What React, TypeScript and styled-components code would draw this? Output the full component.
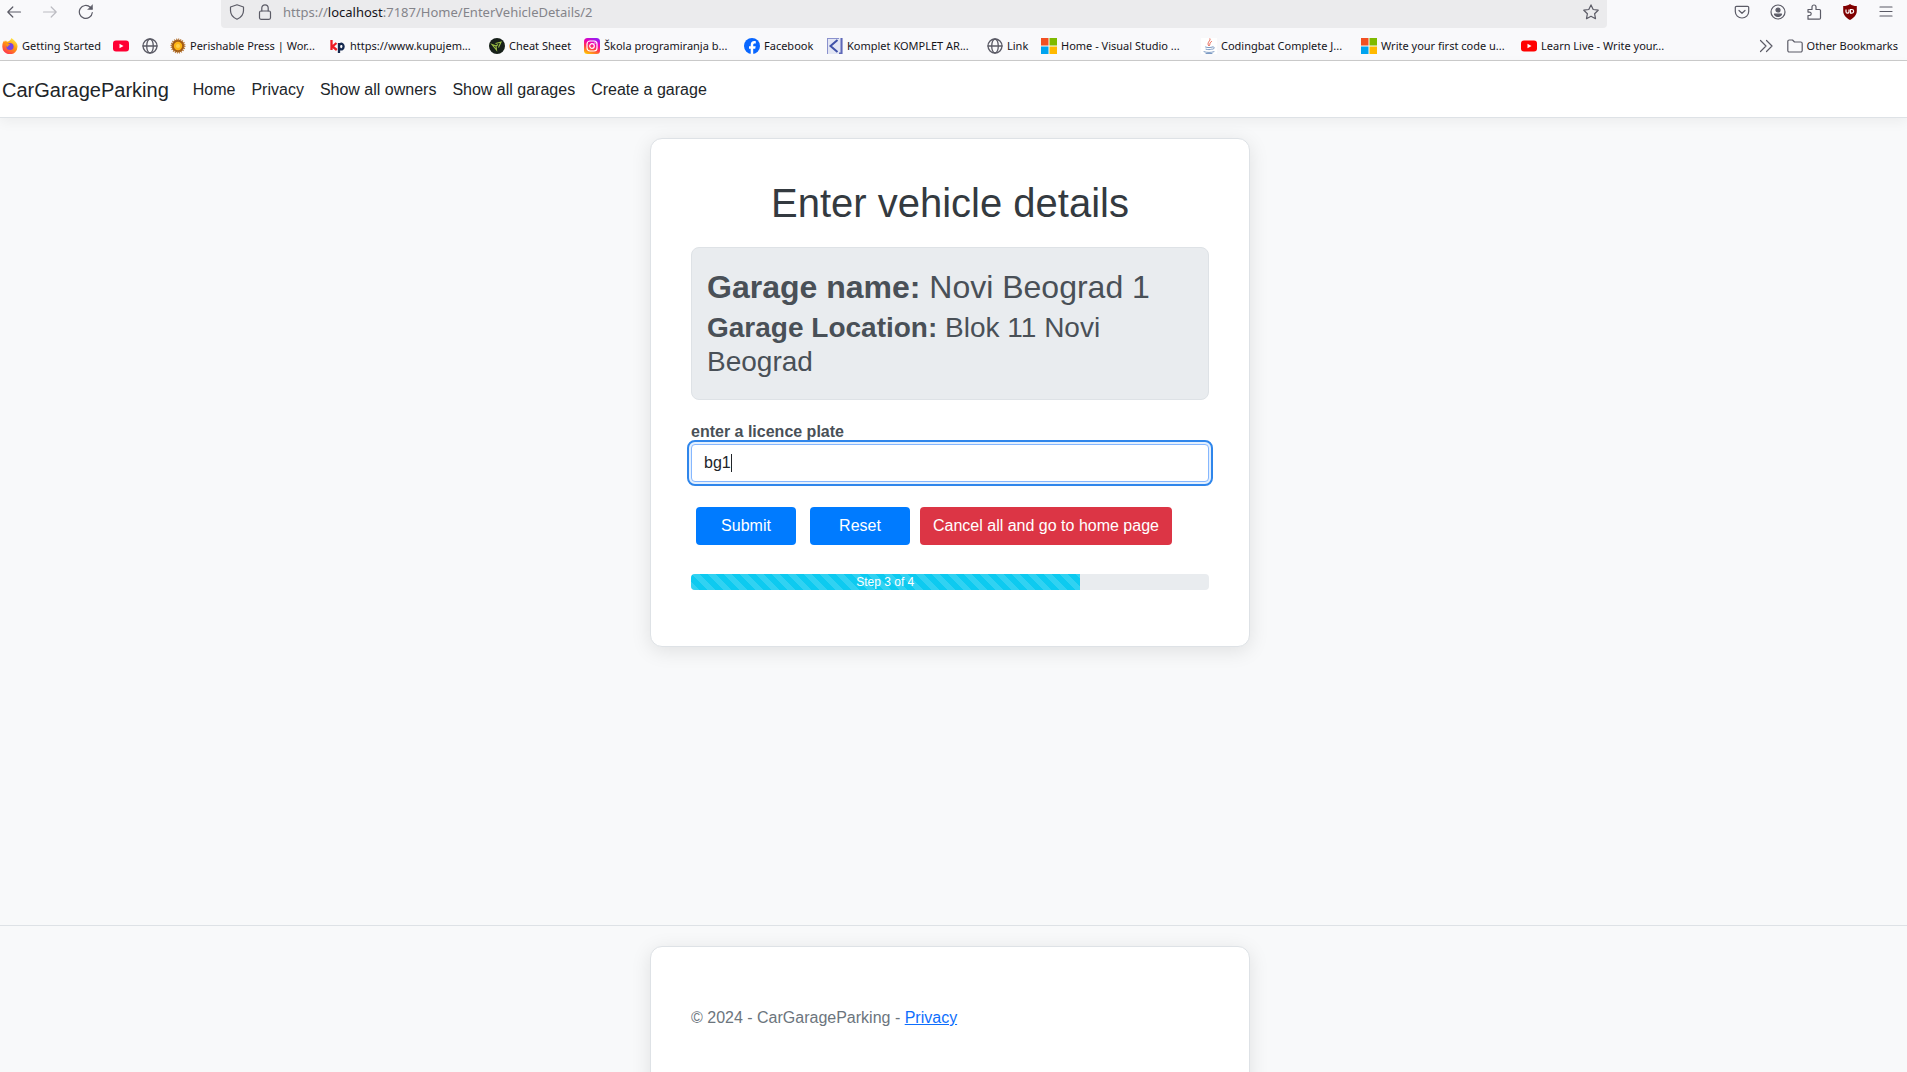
import React, { useEffect, useLayoutEffect, useRef, useState } from "react";
import styled, { createGlobalStyle, keyframes } from "styled-components";

const GlobalStyle = createGlobalStyle`
  *, *::before, *::after { box-sizing: border-box; }
  body { margin: 0; background: #f8f9fa; }
  button, input { font: inherit; }
  svg { display: block; flex: none; }
`;

const Page = styled.div`
  height: 100vh;
  overflow: hidden;
  display: flex;
  flex-direction: column;
  background: #f8f9fa;
  color: #212529;
  font: 16px/24px Arial, "Liberation Sans", sans-serif;
`;

/* ---------- browser chrome ---------- */

const Chrome = styled.header`
  flex: none;
  background: #f9f9fb;
  border-bottom: 1px solid #cccccc;
  font-family: "Noto Sans", sans-serif;
  color: #15141a;
`;

const Toolbar = styled.div`
  display: flex;
  align-items: flex-start;
  height: 28px;
`;

const ToolGroup = styled.div<{ $start?: number; $end?: number }>`
  display: flex;
  align-items: center;
  height: 24px;
  gap: 20px;
  padding-left: ${(p) => p.$start ?? 0}px;
  padding-right: ${(p) => p.$end ?? 0}px;
`;

const IconButton = styled.button`
  display: flex;
  padding: 0;
  border: 0;
  background: none;
  color: #5b5b66;
  &:disabled { color: #bcbcc2; }
`;

const AddressBar = styled.div`
  flex: 1;
  display: flex;
  align-items: center;
  gap: 12px;
  height: 28px;
  margin: 0 127px;
  padding: 0 8px 4px;
  border-radius: 0 0 4px 4px;
  background: #ebebed;
  color: #5b5b66;
`;

const Address = styled.div`
  flex: 1;
  margin-left: -2px;
  font-size: 13px;
  line-height: 20px;
  color: #84848a;
  strong { font-weight: 400; color: #15141a; }
`;

const BookmarkBar = styled.nav`
  display: flex;
  align-items: center;
  height: 32px;
  padding: 4px 9px 0 2px;
  font-size: 11px;
  line-height: 16px;
`;

const Bookmark = styled.a<{ $width?: number }>`
  display: flex;
  align-items: center;
  gap: 4px;
  flex: none;
  width: ${(p) => (p.$width ? p.$width + "px" : "auto")};
  color: inherit;
  text-decoration: none;
  white-space: nowrap;
`;

const BookmarkEnd = styled.div`
  display: flex;
  align-items: center;
  gap: 13px;
  margin-left: auto;
`;

/* ---------- site ---------- */

const NavBar = styled.nav`
  flex: none;
  display: flex;
  align-items: center;
  height: 57px;
  padding: 1px 0 0 2px;
  background: #fff;
  border-bottom: 1px solid #dee2e6;
  box-shadow: 0 4px 12px rgba(0, 0, 0, 0.05);
`;

const Brand = styled.a`
  margin-right: 24px;
  font-size: 20px;
  line-height: 30px;
  color: #212529;
  text-decoration: none;
`;

const NavLinks = styled.ul`
  display: flex;
  gap: 16px;
  margin: 0;
  padding: 0;
  list-style: none;
  a { color: #212529; text-decoration: none; }
`;

const Main = styled.main`
  flex: 1;
  padding: 20px 7px 0 0;
`;

const Card = styled.section`
  max-width: 600px;
  margin: 0 auto;
  padding: 40px;
  background: #fff;
  border: 1px solid #dee2e6;
  border-radius: 12px;
  box-shadow: 0 4px 20px rgba(0, 0, 0, 0.1);
`;

const Title = styled.h1`
  margin: 0 0 20px;
  font-weight: 400;
  font-size: 40px;
  line-height: 48px;
  text-align: center;
  color: #343a40;
`;

const GarageInfo = styled.div`
  margin-bottom: 20px;
  padding: 20px 15px;
  background: #e9ecef;
  border: 1px solid #dee2e6;
  border-radius: 8px;
  color: #495057;
`;

const GarageName = styled.h3`
  margin: 0 0 5px;
  font-weight: 400;
  font-size: 32px;
  line-height: 38px;
`;

const GarageLocation = styled.h4`
  margin: 0;
  font-weight: 400;
  font-size: 28px;
  line-height: 34px;
`;

const Label = styled.label`
  display: block;
  font-weight: 700;
  color: #495057;
`;

const PlateField = styled.div`
  position: relative;
`;

const PlateInput = styled.input`
  display: block;
  width: 100%;
  height: 38px;
  padding: 6px 12px;
  color: #212529;
  caret-color: transparent;
  background: #fff;
  border: 1px solid #86b7fe;
  border-radius: 4px;
  outline: 2px solid #2f86eb;
  outline-offset: 2px;
  box-shadow: 0 0 0 2px #e4f0fe;
`;

const blink = keyframes`
  0%, 70% { opacity: 1; }
  71%, 100% { opacity: 0; }
`;

const Caret = styled.span`
  position: absolute;
  top: 10px;
  width: 1px;
  height: 18px;
  background: #212529;
  pointer-events: none;
  animation: ${blink} 8s infinite;
`;

const Actions = styled.div`
  display: flex;
  align-items: center;
  gap: 10px;
  margin: 25px 0 29px;
  padding-left: 5px;
`;

const ActionButton = styled.button<{ $danger?: boolean }>`
  min-width: 100px;
  height: 38px;
  padding: 0 13px;
  border: 0;
  border-radius: 4px;
  color: #fff;
  background: ${(p) => (p.$danger ? "#dc3545" : "#007bff")};
  &:first-child { margin-right: 4px; }
`;

const Progress = styled.div`
  height: 16px;
  margin-bottom: 16px;
  overflow: hidden;
  background: #e9ecef;
  border-radius: 4px;
`;

const ProgressFill = styled.div`
  height: 100%;
  color: #fff;
  font-size: 12px;
  line-height: 16px;
  text-align: center;
  background-color: #0dcaf0;
  background-image: linear-gradient(
    45deg,
    rgba(255, 255, 255, 0.15) 25%,
    transparent 25%,
    transparent 50%,
    rgba(255, 255, 255, 0.15) 50%,
    rgba(255, 255, 255, 0.15) 75%,
    transparent 75%
  );
  background-size: 16px 16px;
`;

const Footer = styled.footer`
  flex: none;
  height: 147px;
  padding: 20px 7px 0 0;
  border-top: 1px solid #dee2e6;
  line-height: 62px;
  color: #6c757d;
  a { color: #0d6efd; }
`;

/* ---------- icons ---------- */

const Line = ({ children, size = 16, width = 1.2 }: { children: React.ReactNode; size?: number; width?: number }) => (
  <svg width={size} height={size} viewBox="0 0 16 16" fill="none" stroke="#5b5b66" strokeWidth={width} strokeLinecap="round" strokeLinejoin="round" aria-hidden>
    {children}
  </svg>
);

const BackIcon = () => <Line><path d="M14.5 8H1.8M6.800 3 1.800 8l5 5" /></Line>;
const ForwardIcon = () => <Line><path d="M1.500 8h12.700M9.200 3l5 5-5 5" stroke="#bcbcc2" /></Line>;
const ReloadIcon = () => (
  <Line><path d="M14.300 8.500a6.500 6.500 0 1 1-2-5.300l1.500 1.500" /><path d="M14.500 1v4.500H10z" fill="#5b5b66" strokeWidth="0.500" /></Line>
);
const ShieldIcon = () => <Line><path d="M8 .8 14.500 3v3.500c0 4-2.500 7-6.500 8.700C4 13.500 1.500 10.500 1.500 6.500V3z" /></Line>;
const LockIcon = () => <Line><rect x="2.500" y="7" width="11" height="8.300" rx="1.500" /><path d="M4.800 7V4a3.200 3.200 0 0 1 6.400 0v3" /></Line>;
const StarIcon = () => <Line><path d="m8 .9 2.200 4.600 5 .7-3.600 3.500.9 5L8 12.300l-4.500 2.400.9-5L.8 6.200l5-.7z" /></Line>;
const PocketIcon = () => <Line><path d="M2.500 2.300h11a1.200 1.200 0 0 1 1.200 1.200V7.500a6.700 6.500 0 0 1-13.400 0V3.500a1.200 1.200 0 0 1 1.200-1.200z" /><path d="M5 6.500 8 9.300l3-2.800" /></Line>;
const AccountIcon = () => (
  <Line><circle cx="8" cy="8" r="7" /><circle cx="8" cy="6" r="2" fill="#5b5b66" /><path d="M4.500 10.200h7c-.5 1.700-2 2.300-3.500 2.300s-3-.6-3.500-2.300z" fill="#5b5b66" /></Line>
);
const PuzzleIcon = () => (
  <Line><path d="M2 15.200V11.500h1.500a1.700 1.700 0 0 0 0-3.400H2V5.500h4V3a2 2 0 0 1 4 0v2.500h3.500a1 1 0 0 1 1 1V14a1.200 1.200 0 0 1-1.200 1.200z" /></Line>
);
const MenuIcon = () => <Line><path d="M2 3h12M2 7.500h12M2 12h12" /></Line>;
const UblockIcon = () => (
  <svg width="16" height="16" viewBox="0 0 16 16" aria-hidden>
    <path d="M8 0c2 1.500 4 2 6.800 2v5c0 4-3 7-6.800 9C4.200 14 1.200 11 1.200 7V2C4 2 6 1.500 8 0z" fill="#800000" />
    <path d="M4 5.500v2.200a1.500 1.500 0 0 0 3 0V5.500M8.500 5.500h1.300a1.800 1.800 0 0 1 0 3.700H8.500z" fill="none" stroke="#fff" strokeWidth="1.200" />
  </svg>
);
const GlobeIcon = () => (
  <Line width={1.3}><circle cx="8" cy="8" r="7" /><ellipse cx="8" cy="8" rx="3.300" ry="7" /><path d="M1 8h14" /></Line>
);
const FolderIcon = () => <Line><path d="M.8 12.500v-9A1.500 1.500 0 0 1 2.300 2h3.200l2 2h6.200a1.500 1.500 0 0 1 1.500 1.500v7a1.500 1.500 0 0 1-1.500 1.500H2.300a1.500 1.500 0 0 1-1.500-1.500z" /></Line>;
const MoreIcon = () => <Line><path d="m2.500 2.500 5.500 5.500-5.500 5.500M8.500 2.500 14 8l-5.500 5.500" /></Line>;

const FirefoxIcon = () => (
  <svg width="16" height="16" viewBox="0 0 16 16" aria-hidden>
    <defs>
      <linearGradient id="flame" x1="0.800" y1="0" x2="0.200" y2="1">
        <stop offset="0" stopColor="#fff44f" /><stop offset="0.450" stopColor="#ff980e" /><stop offset="1" stopColor="#ff2a55" />
      </linearGradient>
    </defs>
    <path d="M9.500 0c1 1 2.500 1.800 3.500 3.200 1.600 1.500 2.700 3.300 2.500 5.600A7.600 7.600 0 0 1 .3 8.500C.3 6 1 4 2.200 2.600l.6 1.500L4 2.200l.8 1.600C6.500 3.700 8.500 2.500 9.500 0z" fill="url(#flame)" />
    <circle cx="8" cy="8.500" r="3.600" fill="#7542e5" />
    <path d="M4 6c1.500-1 3-.5 4 .5-1 1.200-2.800 1-2.300 2.800C4.500 9 4 7.500 4 6z" fill="#ff980e" />
  </svg>
);
const YoutubeIcon = ({ color = "#ff0033" }: { color?: string }) => (
  <svg width="16" height="16" viewBox="0 0 16 16" aria-hidden><rect y="2.500" width="16" height="11" rx="3" fill={color} /><path d="m6.500 5.700 4 2.300-4 2.300z" fill="#fff" /></svg>
);
const SunIcon = () => (
  <svg width="16" height="16" viewBox="0 0 16 16" aria-hidden>
    <circle cx="8" cy="8" r="6.500" fill="#a05a14" stroke="#b87c3e" strokeWidth="2" strokeDasharray="1 1" />
    <circle cx="8" cy="8" r="4.200" fill="#fdb515" /><circle cx="8" cy="8" r="2" fill="#ffd04a" />
  </svg>
);
const KpIcon = () => (
  <svg width="16" height="16" viewBox="0 0 16 16" fill="none" strokeWidth="2.300" aria-hidden>
    <path d="M1.500 2v10M6.500 5 2.500 8.500 6.800 12" stroke="#ee1c25" />
    <path d="M9 5v10M9 8.500a2.300 2.800 0 1 1 0 .2" stroke="#14284f" />
  </svg>
);
const CheatIcon = () => (
  <svg width="16" height="16" viewBox="0 0 16 16" aria-hidden><circle cx="8" cy="8" r="8" fill="#17201a" /><path d="M3 6.500 7 8 7.500 12zM6.500 5.500 12 4 9.500 9.500M9 6.500 7 8" fill="none" stroke="#9abf45" strokeWidth="1.100" /></svg>
);
const InstagramIcon = () => (
  <svg width="16" height="16" viewBox="0 0 16 16" aria-hidden>
    <defs><linearGradient id="insta" x1="0.200" y1="1" x2="0.600" y2="0"><stop offset="0" stopColor="#ffc800" /><stop offset="0.400" stopColor="#ff3a4a" /><stop offset="0.700" stopColor="#f000b0" /><stop offset="1" stopColor="#9a1cf0" /></linearGradient></defs>
    <rect width="16" height="16" rx="3.500" fill="url(#insta)" />
    <rect x="3" y="3" width="10" height="10" rx="3" fill="none" stroke="#fff" strokeWidth="1.200" /><circle cx="8" cy="8" r="2.300" fill="none" stroke="#fff" strokeWidth="1.200" /><circle cx="11" cy="5" r=".7" fill="#fff" />
  </svg>
);
const FacebookIcon = () => (
  <svg width="16" height="16" viewBox="0 0 16 16" aria-hidden><circle cx="8" cy="8" r="8" fill="#0866ff" /><path d="M6.700 16v-5.300H5V8.200h1.700V7c0-2.700 1.200-3.900 3.700-3.900.5 0 1 .1 1.400.2v2.100h-1C9.600 5.400 9.200 6 9.200 7v1.200h2.500l-.5 2.500h-2V16z" fill="#fff" /></svg>
);
const KompletIcon = () => (
  <svg width="16" height="16" viewBox="0 0 16 16" fill="none" aria-hidden><path d="M0 0h16v16H0z" fill="#e3e6f4" /><path d="M.5 0v16M0 .5h12" stroke="#8a91cd" /><path d="M10.500 2 3.500 8l7 6" stroke="#3f51a8" strokeWidth="2" /><path d="M14.500 0v16M12 15.500h3" stroke="#5f68b8" strokeWidth="2" /></svg>
);
const MicrosoftIcon = () => (
  <svg width="16" height="16" viewBox="0 0 16 16" aria-hidden><path d="M0 0h7.500v7.500H0z" fill="#f25022" /><path d="M8.500 0H16v7.500H8.500z" fill="#7fba00" /><path d="M0 8.500h7.500V16H0z" fill="#00a4ef" /><path d="M8.500 8.500H16V16H8.500z" fill="#ffb900" /></svg>
);
const JavaIcon = () => (
  <svg width="16" height="16" viewBox="0 0 16 16" fill="none" strokeLinecap="round" aria-hidden><path d="M0 0h16v16H0z" fill="#fff" /><path d="M9 .8C10 3 5.500 4 7.500 7.500M10.500 3.500C8 5 9.500 6 8.500 7.500" stroke="#e8604c" /><path d="M4.500 9c2 .8 5 .8 7 0M5 11.200c2 .6 4 .6 5.500 0M3 13.700c3 1 7 1 10 0M12 9c2-.3 2 1.700-.5 2.200M5 15.500h6" stroke="#7d9bc4" /></svg>
);

const bookmarks: { icon: React.ReactNode; text?: string; name?: string; width: number }[] = [
  { icon: <FirefoxIcon />, text: "Getting Started", width: 111 },
  { icon: <YoutubeIcon />, name: "YouTube", width: 29 },
  { icon: <GlobeIcon />, name: "Link", width: 28 },
  { icon: <SunIcon />, text: "Perishable Press | Wor...", width: 160 },
  { icon: <KpIcon />, text: "https://www.kupujem...", width: 159 },
  { icon: <CheatIcon />, text: "Cheat Sheet", width: 95 },
  { icon: <InstagramIcon />, text: "Škola programiranja b...", width: 160 },
  { icon: <FacebookIcon />, text: "Facebook", width: 83 },
  { icon: <KompletIcon />, text: "Komplet KOMPLET AR...", width: 160 },
  { icon: <GlobeIcon />, text: "Link", width: 54 },
  { icon: <MicrosoftIcon />, text: "Home - Visual Studio ...", width: 160 },
  { icon: <JavaIcon />, text: "Codingbat Complete J...", width: 160 },
  { icon: <MicrosoftIcon />, text: "Write your first code u...", width: 160 },
  { icon: <YoutubeIcon color="#ff0000" />, text: "Learn Live - Write your...", width: 160 },
];

const links = ["Home", "Privacy", "Show all owners", "Show all garages", "Create a garage"];

function BrowserChrome() {
  return (
    <Chrome>
      <Toolbar>
        <ToolGroup $start={6}>
          <IconButton aria-label="Back"><BackIcon /></IconButton>
          <IconButton aria-label="Forward" disabled><ForwardIcon /></IconButton>
          <IconButton aria-label="Reload"><ReloadIcon /></IconButton>
        </ToolGroup>
        <AddressBar>
          <ShieldIcon />
          <LockIcon />
          <Address>https://<strong>localhost</strong>:7187/Home/EnterVehicleDetails/2</Address>
          <IconButton aria-label="Bookmark this page"><StarIcon /></IconButton>
        </AddressBar>
        <ToolGroup $end={13}>
          <IconButton aria-label="Pocket"><PocketIcon /></IconButton>
          <IconButton aria-label="Account"><AccountIcon /></IconButton>
          <IconButton aria-label="Extensions"><PuzzleIcon /></IconButton>
          <IconButton aria-label="uBlock"><UblockIcon /></IconButton>
          <IconButton aria-label="Menu"><MenuIcon /></IconButton>
        </ToolGroup>
      </Toolbar>
      <BookmarkBar>
        {bookmarks.map((b, i) => (
          <Bookmark key={i} href="#" $width={b.width} aria-label={b.name}>{b.icon}{b.text}</Bookmark>
        ))}
        <BookmarkEnd>
          <IconButton aria-label="More bookmarks"><MoreIcon /></IconButton>
          <Bookmark href="#"><FolderIcon />Other Bookmarks</Bookmark>
        </BookmarkEnd>
      </BookmarkBar>
    </Chrome>
  );
}

function LicencePlate() {
  const input = useRef<HTMLInputElement>(null);
  const [value, setValue] = useState("bg1");
  const [caretX, setCaretX] = useState(0);

  useEffect(() => {
    input.current?.focus();
    input.current?.setSelectionRange(value.length, value.length);
  }, []);

  // The caret stands after the last character of the typed text.
  useLayoutEffect(() => {
    const ctx = document.createElement("canvas").getContext("2d");
    if (!ctx || !input.current) return;
    const style = getComputedStyle(input.current);
    ctx.font = `${style.fontSize} ${style.fontFamily}`;
    setCaretX(Math.round(13 + ctx.measureText(value).width));
  }, [value]);

  return (
    <>
      <Label htmlFor="plate">enter a licence plate</Label>
      <PlateField>
        <PlateInput id="plate" ref={input} type="text" value={value} onChange={(e) => setValue(e.target.value)} autoComplete="off" spellCheck={false} />
        <Caret style={{ left: caretX }} />
      </PlateField>
    </>
  );
}

export default function App() {
  return (
    <Page>
      <GlobalStyle />
      <BrowserChrome />
      <NavBar>
        <Brand href="#">CarGarageParking</Brand>
        <NavLinks>{links.map((l) => <li key={l}><a href="#">{l}</a></li>)}</NavLinks>
      </NavBar>
      <Main>
        <Card>
          <Title>Enter vehicle details</Title>
          <GarageInfo>
            <GarageName><strong>Garage name:</strong> Novi Beograd 1</GarageName>
            <GarageLocation><strong>Garage Location:</strong> Blok 11 Novi Beograd</GarageLocation>
          </GarageInfo>
          <form onSubmit={(e) => e.preventDefault()}>
            <LicencePlate />
            <Actions>
              <ActionButton type="submit">Submit</ActionButton>
              <ActionButton type="reset">Reset</ActionButton>
              <ActionButton type="button" $danger>Cancel all and go to home page</ActionButton>
            </Actions>
          </form>
          <Progress role="progressbar" aria-valuenow={75} aria-valuemin={0} aria-valuemax={100}>
            <ProgressFill style={{ width: `${(3 / 4) * 100}%` }}>Step 3 of 4</ProgressFill>
          </Progress>
        </Card>
      </Main>
      <Footer>
        <Card as="div">© 2024 - CarGarageParking - <a href="#">Privacy</a></Card>
      </Footer>
    </Page>
  );
}
